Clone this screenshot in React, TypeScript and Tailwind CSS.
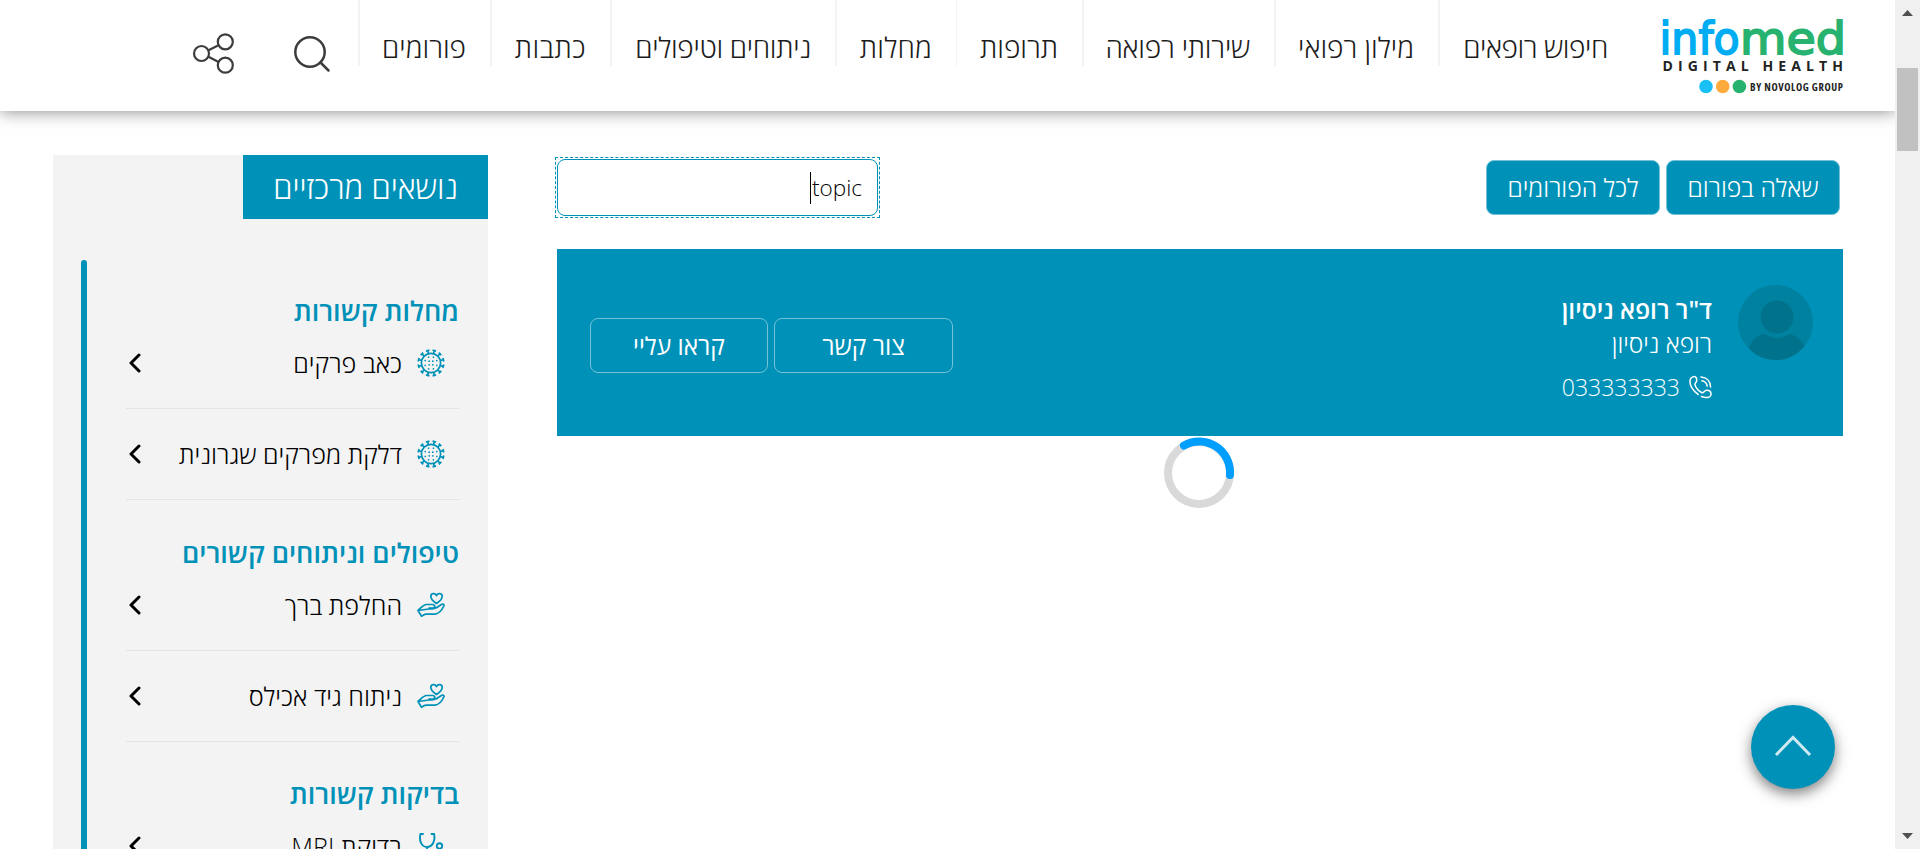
import { useId } from 'react';

const navItems = [
  { label: 'חיפוש רופאים', box: 'w-[194px] border-l-2 tracking-[-0.4px]' },
  { label: 'מילון רפואי', box: 'w-[164px] border-l-2 tracking-normal' },
  { label: 'שירותי רפואה', box: 'w-[192px] border-l-2 tracking-[-0.2px]' },
  { label: 'תרופות', box: 'w-[126px] border-l tracking-normal' },
  { label: 'מחלות', box: 'w-[121px] border-l-2 tracking-[0.2px]' },
  { label: 'ניתוחים וטיפולים', box: 'w-[225px] border-l-2 tracking-[-0.3px]' },
  { label: 'כתבות', box: 'w-[120px] border-l-2 tracking-[0.5px]' },
  { label: 'פורומים', box: 'w-[132px] border-l-2 tracking-normal' },
];

type IconKind = 'virus' | 'hand' | 'stethoscope';

const sections: { title: string; icon: IconKind; items: string[] }[] = [
  { title: 'מחלות קשורות', icon: 'virus', items: ['כאב פרקים', 'דלקת מפרקים שגרונית'] },
  { title: 'טיפולים וניתוחים קשורים', icon: 'hand', items: ['החלפת ברך', 'ניתוח גיד אכילס'] },
  { title: 'בדיקות קשורות', icon: 'stethoscope', items: ['בדיקת MRI'] },
];

function Logo() {
  return (
    <svg width="182" height="78" viewBox="0 0 182 78" direction="ltr" overflow="visible" className="block">
      <g fontFamily="'DejaVu Sans'" fontSize="45" strokeWidth="1.800">
        <text x="-1.500" y="37.500" textLength="80" lengthAdjust="spacingAndGlyphs" fill="#00adf2" stroke="#00adf2">info</text>
        <text x="79" y="37.500" textLength="106" lengthAdjust="spacingAndGlyphs" fill="#27b36f" stroke="#27b36f">med</text>
      </g>
      <g fontFamily="'Open Sans'" fontWeight="700" fill="#222">
        <text x="1.500" y="54.500" textLength="180.500" fontSize="14" style={{ fontStretch: '90%' }}>DIGITAL HEALTH</text>
        <text x="89" y="74.500" textLength="93" fontSize="10.500" style={{ fontStretch: '85%' }}>BY NOVOLOG GROUP</text>
      </g>
      <circle cx="45" cy="70.500" r="6.800" fill="#18c0f5" />
      <circle cx="61.700" cy="70.500" r="6.800" fill="#fdab3d" />
      <circle cx="78.400" cy="70.500" r="6.800" fill="#27b36f" />
    </svg>
  );
}

function VirusIcon() {
  const spikes = Array.from({ length: 12 }, (_, i) => i * 30 + 15);
  const dots = Array.from({ length: 8 }, (_, i) => i * 45 + 22.5);
  return (
    <svg width="28" height="28" viewBox="-14 -14 28 28" fill="none" stroke="#0091b8" strokeWidth="1.700">
      <circle r="9.600" />
      {spikes.map((a) => (
        <path key={a} d="M0-9.600V-12.800M-1.800-12.800H1.800" transform={`rotate(${a})`} />
      ))}
      <g fill="#0091b8" stroke="none">
        {dots.map((a) => (
          <circle key={a} cy="-6.300" r=".85" transform={`rotate(${a})`} />
        ))}
        <circle cx="-1.800" cy="-1.800" r=".9" />
        <circle cx="1.800" cy="-1.800" r=".9" />
        <circle cx="-1.800" cy="1.800" r=".9" />
        <circle cx="1.800" cy="1.800" r=".9" />
      </g>
    </svg>
  );
}

function HandIcon() {
  return (
    <svg width="28" height="28" viewBox="0 0 28 28" fill="none" stroke="#0091b8" strokeWidth="1.700" strokeLinejoin="round" strokeLinecap="round">
      <path d="M19.500 12.500C16 10 13.800 8 13.800 5.400C13.800 2.200 18 1.600 19.500 4.500C21 1.600 25.200 2.200 25.200 5.400C25.200 8 23 10 19.500 12.500Z" />
      <path d="M1 19.500C4 17 6 14 9 13.500H15.500C18.500 13.500 18.500 17 15.500 17.200H12M19 17L24 13.700C26 12.500 27.500 13.500 26.800 15C25 19 22 22.500 18 23.200H9.500C7.500 23.200 6 24.500 4.500 25.200L1 19.500ZM12 17.200C15 19 18 17.500 20 16.300" />
    </svg>
  );
}

function StethoscopeIcon() {
  return (
    <svg width="28" height="28" viewBox="0 0 28 28" fill="none" stroke="#0091b8" strokeWidth="1.900" strokeLinecap="round">
      <path d="M6 2H3.500C2 8 4 15 10 15C16 15 18.500 8 17 2H14.500M10 15C10 26 22 26 22.500 17" />
      <circle cx="22.500" cy="14" r="2.700" />
    </svg>
  );
}

const icons = { virus: VirusIcon, hand: HandIcon, stethoscope: StethoscopeIcon };

function TopicRow({ label, kind, first }: { label: string; kind: IconKind; first: boolean }) {
  const Icon = icons[kind];
  return (
    <li className={`${first ? 'pt-3' : 'pt-[25px]'} border-b border-[#e4e4e4] pb-[25px]`}>
      <a className="flex h-10 items-center pr-[14px] pl-[3px]">
        <Icon />
        <span className="mr-[15px] flex-1 text-[25.2px] leading-10 font-light text-black">{label}</span>
        <svg width="13" height="20" viewBox="0 0 13 20" fill="none" stroke="#000" strokeWidth="3" strokeLinecap="round" strokeLinejoin="round">
          <path d="M10 2L2 10L10 18" />
        </svg>
      </a>
    </li>
  );
}

function Avatar() {
  const id = useId();
  return (
    <svg width="75" height="76" viewBox="0 0 75 76" className="block">
      <clipPath id={id}><circle cx="37.500" cy="37.500" r="37.500" /></clipPath>
      <circle cx="37.500" cy="37.500" r="37.500" fill="#00819f" />
      <g clipPath={`url(#${id})`} fill="#00728c">
        <circle cx="39" cy="32" r="16.500" />
        <path d="M11 62C14 54 20 50 27 49C35 54.500 43 54.500 51 49C58 50 64 55 67 62L60 76H15Z" />
      </g>
    </svg>
  );
}

function PhoneIcon() {
  return (
    <svg width="23" height="24" viewBox="0 0 24 24" fill="none" stroke="#fff" strokeWidth="1.600" strokeLinecap="round" strokeLinejoin="round">
      <path d="M9.500 19.800C4.500 16 1 10.500 1 6C1 3 3.500 1 5.500 1C7.500 1 8.300 3.500 8 5.500C7.800 7.500 6 7.800 6.200 9.500C7 12.500 10 16 13.500 18C15.500 18.500 15.800 15.500 18.500 15.500C21.500 15.500 23 17.500 23 19.500C23 22 20 23 18 23C16 23 14.500 22.500 13 22" />
      <path d="M12.500 1.500C18.500 2 22.500 6 22.500 12M13.500 5.500C16.500 6 18.500 8 19 11" />
    </svg>
  );
}

export default function App() {
  return (
    <div dir="ltr" className="flex h-[849px] w-[1920px] overflow-hidden bg-white font-['Open_Sans','Liberation_Sans',sans-serif] text-black">
      <div dir="rtl" className="relative flex h-full w-[1895px] flex-col overflow-hidden">
        <header className="z-10 flex h-[111px] shrink-0 bg-white pr-[52px] shadow-[0_0_16px_rgba(0,0,0,0.5)]">
          <div className="w-[211px] pt-4"><Logo /></div>
          <nav className="flex h-[66px]">
            {navItems.map((n) => (
              <a key={n.label} className={`${n.box} shrink-0 border-[#f3f3f3] pr-6 pt-[27px] text-[28px] leading-10 font-light whitespace-nowrap text-[#1c1c1c]`}>
                {n.label}
              </a>
            ))}
          </nav>
          <div className="mr-[27px] flex pt-[33px]">
            <svg width="38" height="42" viewBox="0 0 38 42" fill="none" stroke="#3c3c3c" strokeWidth="2.500" strokeLinecap="round">
              <circle cx="17" cy="19" r="14.700" /><path d="M27.500 29.500L35.500 37.500" />
            </svg>
            <svg width="42" height="42" viewBox="0 0 42 42" fill="none" stroke="#3c3c3c" strokeWidth="2.200" className="mr-[59px]">
              <circle cx="9.500" cy="20.500" r="7.500" /><circle cx="33.300" cy="8.800" r="7.500" /><circle cx="33.300" cy="32.200" r="7.500" />
              <path d="M16.500 17.300L26.500 12.300M16.500 23.800L26.500 28.900" />
            </svg>
          </div>
        </header>

        <div className="flex min-h-0 flex-1 items-start pr-[52px]">
          <main className="w-[1286px]">
            <div className="mt-[46px] flex h-[61px] items-center justify-between pr-[3px]">
              <div className="flex gap-[6px] text-[24.800px] leading-[53px] font-light text-white">
                <button className="h-[55px] w-[174px] rounded-[8px] border border-[#74c2d7] bg-[#0091b8] pb-1">שאלה בפורום</button>
                <button className="h-[55px] w-[174px] rounded-[8px] border border-[#74c2d7] bg-[#0091b8] pb-1">לכל הפורומים</button>
              </div>
              <div className="ml-[-2px] h-[61px] w-[325px] border border-dashed border-[#0091b8] p-px">
                <div className="flex h-[57px] w-[321px] items-center rounded-[8px] border border-[#0091b8] bg-white pr-[15px]">
                  <span className="text-[22.600px] leading-8 font-light">topic</span>
                  <span className="mr-px h-8 w-px bg-black" />
                </div>
              </div>
            </div>

            <section className="mt-[31px] flex h-[187px] bg-[#0091b8] pr-[30px] pl-[33px] text-white">
              <div className="pt-[36px]"><Avatar /></div>
              <div className="mr-[26px] pt-[44px]">
                <h1 className="text-[24.500px] leading-[34px] font-[650]">ד"ר רופא ניסיון</h1>
                <p className="text-[24.500px] leading-[34px] font-light">רופא ניסיון</p>
                <p className="mt-[9px] flex items-center text-[23px] leading-[34px] font-[350]">
                  <PhoneIcon /><span className="mr-[9px]">033333333</span>
                </p>
              </div>
              <div className="mr-auto flex gap-[6px] pt-[69px] text-[24.500px] leading-[53px] font-[370]">
                <button className="h-[55px] w-[179px] rounded-[8px] border border-[#74c2d7]">צור קשר</button>
                <button className="h-[55px] w-[178px] rounded-[8px] border border-[#74c2d7]">קראו עליי</button>
              </div>
            </section>

            <div className="mt-px flex justify-center pr-[2px]">
              <svg width="72" height="72" viewBox="0 0 72 72" fill="none" strokeWidth="8">
                <circle cx="36" cy="36" r="31" stroke="#d9d9d9" />
                <path d="M21 8.500A31 31 0 0 1 67 38" stroke="#009eff" strokeLinecap="round" />
              </svg>
            </div>
          </main>

          <aside className="mt-[44px] mr-[69px] h-[800px] w-[435px] bg-[#f3f3f3]">
            <h2 className="flex h-16 w-[245px] items-center bg-[#0091b8] pr-[30px] text-[31.3px] leading-10 font-[330] text-white">נושאים מרכזיים</h2>
            <div className="mt-[41px] mr-[29px] ml-[28px] flex justify-between">
              <div className="w-[333px] pt-[31px]">
                {sections.map((s) => (
                  <div key={s.title} className="mb-[32.500px]">
                    <h3 className="text-[27px] leading-10 font-semibold whitespace-nowrap text-[#0091b8]">{s.title}</h3>
                    <ul>
                      {s.items.map((t, i) => <TopicRow key={t} label={t} kind={s.icon} first={i === 0} />)}
                    </ul>
                  </div>
                ))}
              </div>
              <div className="w-[6px] rounded-full bg-[#0091b8]" />
            </div>
          </aside>
        </div>

        <button className="absolute top-[705px] left-[1751px] z-20 flex h-[84px] w-[84px] items-center justify-center rounded-full bg-[#0091b8] shadow-[0_5px_14px_rgba(0,0,0,0.5)]">
          <svg width="38" height="24" viewBox="0 0 38 24" fill="none" stroke="#cfe9f1" strokeWidth="3" className="mb-[3px]">
            <path d="M2 21L19 3.500L36 21" />
          </svg>
        </button>
      </div>

      <div className="flex h-full w-[25px] flex-col items-center bg-[#f0f0f0]">
        <svg width="11" height="6" viewBox="0 0 11 6" className="mt-[10px]"><path d="M0 6L5.500 0L11 6Z" fill="#505050" /></svg>
        <div className="mt-[52px] h-[83px] w-[21px] bg-[#c1c1c1]" />
        <svg width="11" height="6" viewBox="0 0 11 6" className="mt-auto mb-[10px]"><path d="M0 0L5.500 6L11 0Z" fill="#505050" /></svg>
      </div>
    </div>
  );
}
